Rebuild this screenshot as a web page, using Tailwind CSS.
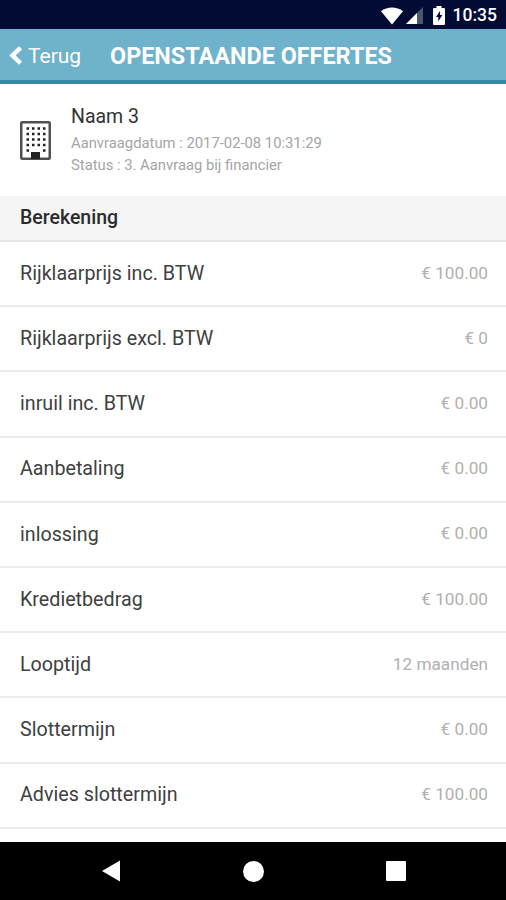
<!DOCTYPE html>
<html lang="nl">
<head>
  <meta charset="UTF-8" />
  <title>Openstaande offertes</title>
  <script src="https://cdn.jsdelivr.net/npm/@tailwindcss/browser@4"></script>
</head>
<body class="bg-white font-['Roboto',sans-serif]">

  <div class="flex flex-col w-[506px] h-[900px] overflow-hidden">

    <!-- status bar -->
    <div class="flex items-center justify-end h-[29px] shrink-0 bg-[#010b33] pr-[9px] text-white">
      <svg class="w-[22px] h-[18px] mt-0.5" viewBox="0 0 22 18" fill="currentColor"><path d="M0 4.200C6.500-.7 15.500-.7 22 4.200L11 17.500z"/></svg>
      <svg class="w-[17px] h-[17px] ml-[3px] mt-0.5" viewBox="0 0 17 17" fill="currentColor"><path d="M17 0v17H0z" opacity=".3"/><path d="M11 6v11H0z"/></svg>
      <svg class="w-3 h-[19px] ml-2.5 mt-0.5" viewBox="0 0 12 19"><path fill="#fff" d="M3.500 0h5v2H11q1 0 1 1v15q0 1-1 1H1q-1 0-1-1V3q0-1 1-1h2.500z"/><path fill="#010b33" d="M7 5 3 11h2.300v4.500L9.300 9H7z"/></svg>
      <span class="ml-2 mt-[3px] text-[17.500px] leading-none font-medium">10:35</span>
    </div>

    <!-- header -->
    <div class="flex items-center h-[55px] shrink-0 bg-[#6fb2cb] border-b-4 border-[#318dab] pl-[9px] text-white">
      <svg class="w-[13px] h-[19px] mt-px" viewBox="0 0 13 19" fill="none" stroke="currentColor" stroke-width="4.500"><path d="M11.500 1.800 3.500 9.500l8 7.700"/></svg>
      <span class="ml-1.5 mt-1 w-[82px] text-[21px] leading-none">Terug</span>
      <h1 class="mt-1 text-[23.400px] leading-none font-bold whitespace-nowrap">OPENSTAANDE OFFERTES</h1>
    </div>

    <!-- applicant -->
    <div class="flex items-center h-28 shrink-0 pl-5">
      <svg class="w-[31px] h-[39px]" viewBox="0 0 31 39">
        <rect x="1.250" y="1.250" width="28.500" height="36.500" rx="1" fill="#fff" stroke="#505050" stroke-width="2.500"/>
        <path d="M6.500 7.500h20M6.500 13h20M6.500 18.500h20M6.500 24h20" stroke="#222" stroke-width="2.500" stroke-dasharray="2.500 3"/>
        <path d="M6.500 29.500H9M23 29.500h2.500" stroke="#222" stroke-width="2.500"/>
        <path d="M11 31h9v7h-9z" fill="#222"/>
      </svg>
      <div class="ml-5 -mt-0.5">
        <div class="text-[19.500px] leading-[30px] text-[#333]">Naam 3</div>
        <div class="text-[14.800px] leading-[22px] text-[#a5a5a5]">Aanvraagdatum : 2017-02-08 10:31:29</div>
        <div class="text-[14.800px] leading-[22px] text-[#a5a5a5]">Status : 3. Aanvraag bij financier</div>
      </div>
    </div>

    <div class="flex items-center h-[46px] shrink-0 bg-[#f5f5f5] border-b-2 border-[#e6e6e6] pl-5 text-[19.500px] font-medium text-[#2b2b2b]">Berekening</div>

    <div id="rows" class="flex-1 min-h-0 overflow-hidden"></div>

    <!-- navigation bar -->
    <div class="flex items-center h-[58px] shrink-0 bg-black pl-[102px] text-white">
      <svg class="w-[18px] h-[22px]" viewBox="0 0 18 22" fill="currentColor"><path d="M18 .5v21L0 11z"/></svg>
      <div class="ml-[123px] size-[21px] rounded-full bg-white"></div>
      <div class="ml-[122px] size-5 rounded-[1px] bg-white"></div>
    </div>
  </div>

  <script>
    const rows = [
      ['Rijklaarprijs inc. BTW', '€ 100.00'],
      ['Rijklaarprijs excl. BTW', '€ 0'],
      ['inruil inc. BTW', '€ 0.00'],
      ['Aanbetaling', '€ 0.00'],
      ['inlossing', '€ 0.00'],
      ['Kredietbedrag', '€ 100.00'],
      ['Looptijd', '12 maanden'],
      ['Slottermijn', '€ 0.00'],
      ['Advies slottermijn', '€ 100.00'],
    ];

    document.getElementById('rows').innerHTML = rows.map(([label, value]) => `
      <div class="flex items-center justify-between h-[65.200px] border-b-2 border-[#ebebeb] pl-5 pr-[18px]">
        <span class="text-[19.700px] text-[#404040]">${label}</span>
        <span class="text-[17.200px] text-[#b0b0b0]">${value}</span>
      </div>`).join('');
  </script>

</body>
</html>
